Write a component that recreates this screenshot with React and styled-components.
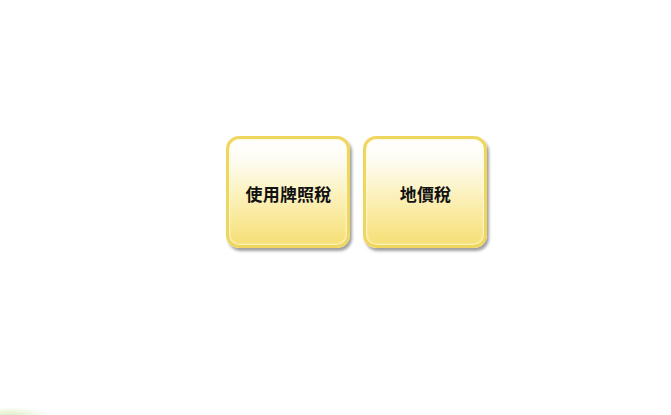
import React from "react";
import styled, { createGlobalStyle } from "styled-components";

const Global = createGlobalStyle`
  html, body {
    margin: 0;
    padding: 0;
    background: #ffffff;
  }
  body {
    width: 671px;
    height: 415px;
    overflow: hidden;
    font-family: "Noto Sans CJK TC", "Noto Sans CJK SC", "Noto Sans", sans-serif;
    background:
      radial-gradient(ellipse 40px 8px at 10px 415px, rgba(200, 225, 150, 0.55), rgba(255,255,255,0) 100%),
      #ffffff;
  }
`;

const Page = styled.div`
  width: 671px;
  height: 415px;
  box-sizing: border-box;
  padding: 136px 0 0 226px;
  display: flex;
  align-items: flex-start;
  gap: 13px;
`;

const TaxButton = styled.button`
  width: 124px;
  height: 112px;
  box-sizing: border-box;
  border: 3px solid #efd75f;
  border-radius: 13px;
  background: linear-gradient(
    to bottom,
    #ffffff 0%,
    #fefcf0 22%,
    #fbefb4 58%,
    #f6df74 100%
  );
  box-shadow:
    inset 0 0 2px 1px rgba(255, 250, 215, 0.9),
    2px 3px 3px rgba(0, 0, 0, 0.38);
  display: flex;
  align-items: center;
  justify-content: center;
  padding: 3px 0 0 1px;
  font-family: "Noto Sans CJK TC", "Noto Sans CJK SC", sans-serif;
  font-size: 17px;
  font-weight: 600;
  color: #111111;
  letter-spacing: 0.2px;
  cursor: pointer;
`;

export default function App() {
  return (
    <>
      <Global />
      <Page>
        <TaxButton>使用牌照稅</TaxButton>
        <TaxButton>地價稅</TaxButton>
      </Page>
    </>
  );
}
